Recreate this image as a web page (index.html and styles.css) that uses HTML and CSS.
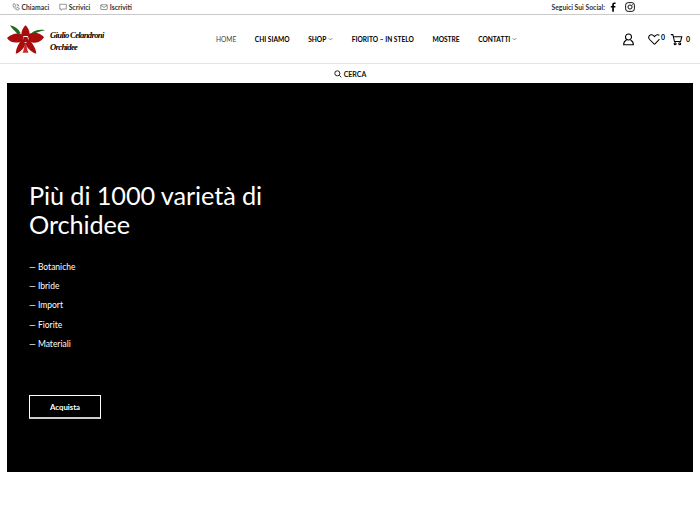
FILE: index.html
```html
<!DOCTYPE html>
<html lang="it">
<head>
<meta charset="utf-8">
<title>Giulio Celandroni Orchidee</title>
<link rel="stylesheet" href="styles.css">
</head>
<body>
<div class="topbar">
  <div class="top-links">
    <a class="top-link"><svg class="ti" viewBox="0 0 16 16"><path d="M3 2l2.500-.5L7 5 5.500 6.300c.8 1.800 2.400 3.400 4.200 4.200L11 9l3.500 1.500-.5 2.500c-.2.800-1 1.300-1.800 1.200C6.800 13.500 2.500 9.200 1.800 3.800 1.700 3 2.200 2.200 3 2z"/><path d="M9.500 2.500a4 4 0 0 1 4 4M9.500 4.800a1.800 1.800 0 0 1 1.800 1.800"/></svg>Chiamaci</a>
    <a class="top-link"><svg class="ti" viewBox="0 0 16 16"><path d="M1.500 2.500h13v9.500H7l-3 2.500V12H1.500z"/></svg>Scrivici</a>
    <a class="top-link"><svg class="ti" viewBox="0 0 16 16"><rect x="1.500" y="3.500" width="13" height="9.500" rx="1"/><path d="M1.500 4.500L8 9l6.500-4.500"/></svg>Iscriviti</a>
  </div>
  <div class="socials">
    <span>Seguici Sui Social:</span>
    <svg class="fb" viewBox="0 0 10 16"><path d="M6.500 16V9h2.300l.4-2.800H6.500V4.500c0-.8.300-1.400 1.400-1.400h1.400V.6C9 .5 8.200.5 7.300.5 5.200.5 3.700 1.800 3.700 4.200v2H1.300V9h2.400v7z"/></svg>
    <svg class="ig" viewBox="0 0 16 16"><rect x="1" y="1" width="14" height="14" rx="4"/><circle cx="8" cy="8" r="3.300"/><circle class="dot" cx="11.800" cy="4.200" r=".8"/></svg>
  </div>
</div>

<header class="mainbar">
  <a class="brand">
    <svg class="logo" viewBox="0 0 40 31">
      <path class="leaf" d="M3 1c5 1 9 4 11 8l-3 1C8 7 5 4 3 1zM39 6c-5-1-10 0-14 3l1 2c4-3 8-4 13-5z"/>
      <path class="petal" d="M15 12C14 7 17 3 19 1c2 2 5 6 4 11z"/>
      <path class="petal" d="M17 11C12 8 5 9 0 14c3 5 10 6 16 3z"/>
      <path class="petal" d="M21 11c5-4 12-3 17 2-3 5-9 8-15 4z"/>
      <path class="petal" d="M16 15c-4 4-7 10-7 15 4-1 8-5 10-10z"/>
      <path class="petal" d="M22 15c4 4 8 10 8 15-4-1-9-5-11-10z"/>
      <path class="petal" d="M17 13h4l1 5h-6z"/>
      <path class="lip" d="M19 18c-2 4-1 8-3 11h6c-2-3-1-7-3-11z"/>
    </svg>
    <span class="brand-name">Giulio Celandroni<br>Orchidee</span>
  </a>
  <nav class="nav">
    <a class="nav-item current">HOME</a>
    <a class="nav-item">CHI SIAMO</a>
    <a class="nav-item">SHOP<svg class="chev" viewBox="0 0 8 5"><path d="M1 1l3 3 3-3"/></svg></a>
    <a class="nav-item">FIORITO – IN STELO</a>
    <a class="nav-item">MOSTRE</a>
    <a class="nav-item">CONTATTI<svg class="chev" viewBox="0 0 8 5"><path d="M1 1l3 3 3-3"/></svg></a>
  </nav>
  <div class="actions">
    <svg class="act user" viewBox="0 0 16 16"><circle cx="8" cy="5" r="3.700"/><path d="M5.500 8.500C3.500 9.500 2 11.500 2 14.500h12c0-3-1.500-5-3.500-6"/></svg>
    <span class="act-wrap wish"><svg class="act" viewBox="0 0 16 16"><path d="M8 14L2 8c-1.500-1.800-1.300-4 0-5.200 1.500-1.300 4-1 6 1.700 2-2.700 4.500-3 6-1.700"/><path d="M8 14l4.500-4.500 1.500-2"/></svg><sup class="count">0</sup></span>
    <span class="act-wrap"><svg class="act" viewBox="0 0 16 16"><path d="M1 2h2.500l2 8.500h7.500l1.500-6H4"/><circle cx="6.300" cy="13.300" r="1.200"/><circle cx="12" cy="13.300" r="1.200"/></svg><span class="count cart">0</span></span>
  </div>
</header>

<div class="searchbar">
  <svg class="search-icon" viewBox="0 0 12 12"><circle cx="5" cy="5" r="3.800"/><path d="M8 8l3 3"/></svg>CERCA
</div>

<main class="hero">
  <h1 class="hero-title">Più di 1000 varietà di Orchidee</h1>
  <ul class="hero-list">
    <li>— Botaniche</li>
    <li>— Ibride</li>
    <li>— Import</li>
    <li>— Fiorite</li>
    <li>— Materiali</li>
  </ul>
  <a class="hero-btn">Acquista</a>
</main>
</body>
</html>
```
FILE: styles.css
```css
* { box-sizing: border-box; }
html, body { margin: 0; padding: 0; }
body { width: 700px; height: 525px; overflow: hidden; background: #fff; color: #000; font-family: Lato, "Liberation Sans", sans-serif; }
svg { display: block; fill: none; stroke: #000; }

.topbar { height: 15px; border-bottom: 1px solid #c9c9c9; display: flex; justify-content: space-between; align-items: center; padding: 0 65px 1px 12px; font-size: 6.800px; font-weight: 700; color: #333; }
.top-links { display: flex; gap: 10px; }
.top-link { display: flex; align-items: center; gap: 1.500px; }
.ti { width: 8px; height: 8px; stroke-width: 1; stroke: #333; }
.socials { display: flex; align-items: center; }
.fb { width: 6px; height: 10px; fill: #000; stroke: none; margin-left: 5px; }
.ig { width: 10px; height: 10px; margin-left: 9px; stroke-width: 1.500; }
.ig .dot { fill: #000; stroke: none; }

.mainbar { height: 49px; border-bottom: 1px solid #e4e4e4; display: flex; align-items: center; padding: 0 10px 0 7px; }
.brand { display: flex; align-items: center; gap: 4px; width: 209px; }
.logo { width: 39px; height: 31px; stroke: none; }
.leaf { fill: #1d6b1f; }
.petal { fill: #a80c0c; }
.lip { fill: #c92a2a; }
.brand-name { margin-top: 4px; font-family: "Liberation Serif", serif; font-style: italic; font-weight: 700; font-size: 8.600px; line-height: 12.500px; letter-spacing: -.65px; white-space: nowrap; }
.nav { display: flex; align-items: center; gap: 18.600px; font-size: 6.600px; font-weight: 700; }
.nav-item { display: flex; align-items: center; gap: 2px; white-space: nowrap; }
.nav-item.current { font-weight: 400; color: #444; }
.chev { width: 5px; height: 4px; stroke: #444; stroke-width: 1; }
.actions { margin-left: auto; display: flex; align-items: center; }
.act { width: 13px; height: 13px; stroke-width: 1.300; }
.act-wrap { display: flex; align-items: center; }
.count { font-size: 7px; font-weight: 700; margin-left: 3px; }
.wish { margin-left: 13px; margin-right: 5px; }
.wish .count { margin-left: 0; align-self: flex-start; }

.searchbar { height: 19px; display: flex; align-items: center; justify-content: center; gap: 2px; font-size: 7px; font-weight: 700; color: #111; }
.search-icon { width: 8px; height: 8px; stroke-width: 1.300; }

.hero { height: 389px; margin: 0 7px; background: #000; color: #fff; padding: 98px 22px 0; display: flex; flex-direction: column; align-items: flex-start; }
.hero-title { margin: 0; width: 250px; font-size: 25.300px; font-weight: 400; line-height: 29px; letter-spacing: -.1px; }
.hero-list { list-style: none; margin: 18.500px 0 0; padding: 0; font-size: 8.500px; line-height: 19.400px; }
.hero-btn { margin-top: 40.500px; width: 72px; height: 24px; border: 1px solid #fff; border-bottom: 2px solid #ccc; display: flex; align-items: center; justify-content: center; font-size: 7.800px; font-weight: 700; }
```
